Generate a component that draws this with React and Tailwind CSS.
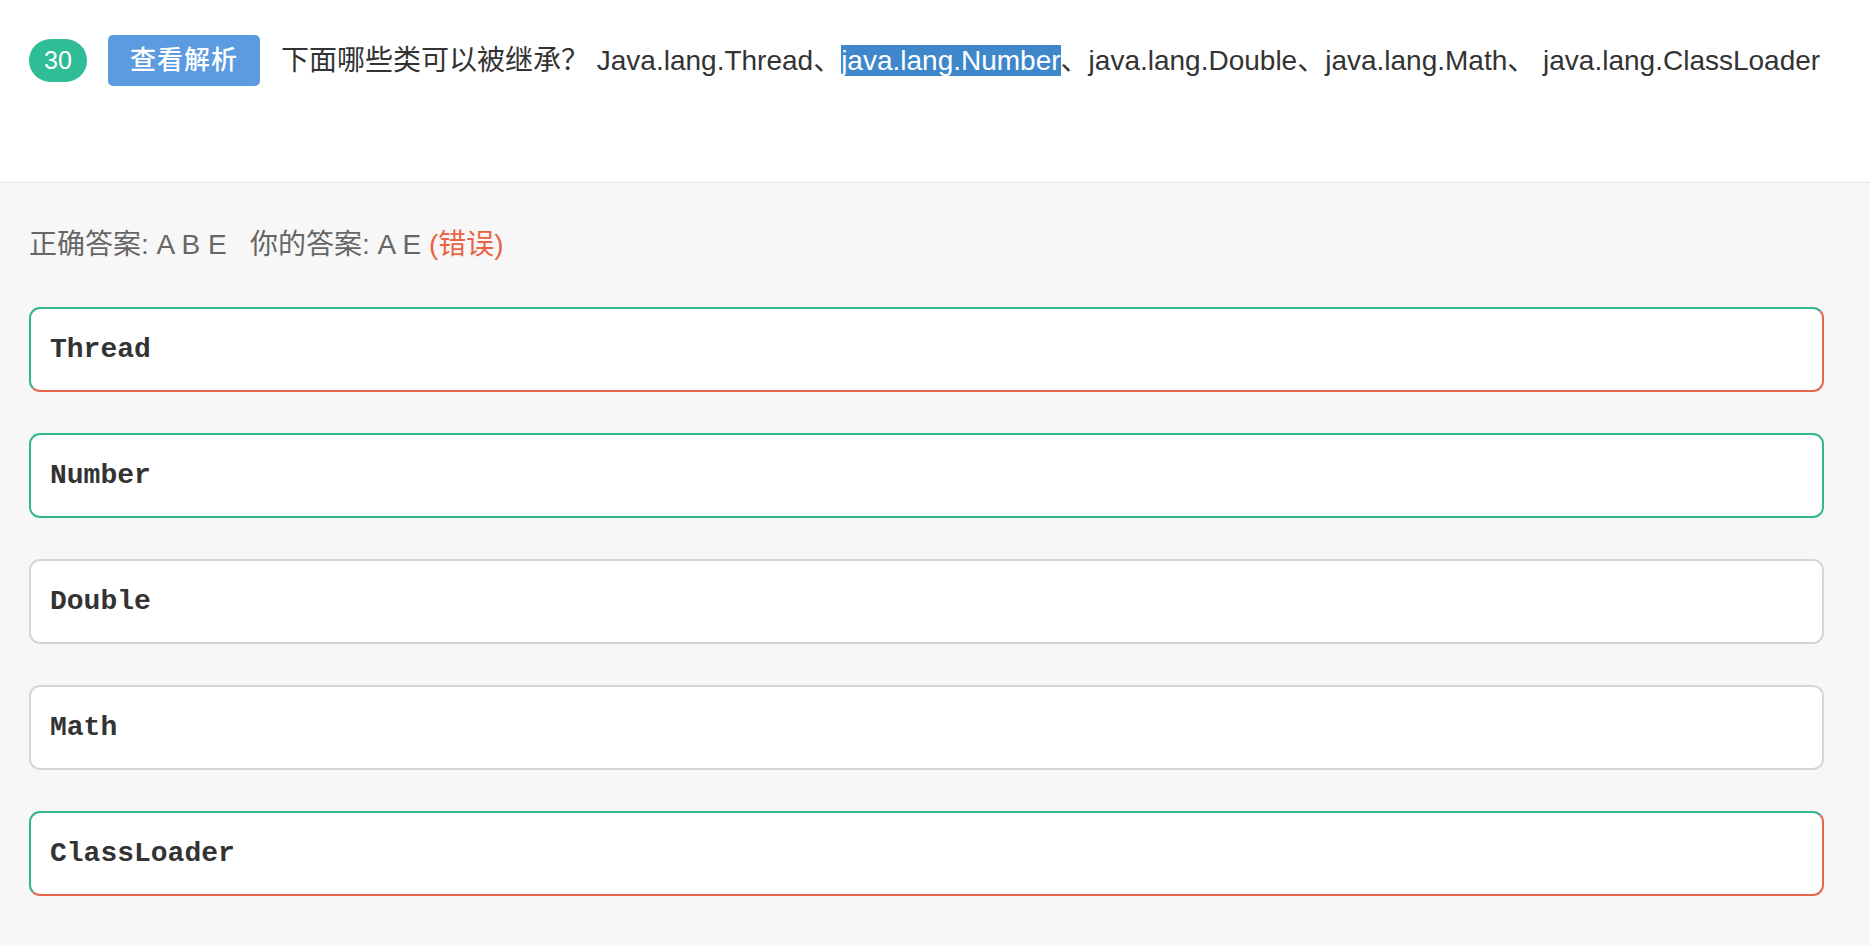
const question = {
  no: 30,
  prefix: '下面哪些类可以被继承？ ',
  parts: ['Java.lang.Thread、', 'java.lang.Number', '、java.lang.Double、java.lang.Math、 java.lang.ClassLoader'],
};

const options = [
  { label: 'Thread', state: 'mixed' },
  { label: 'Number', state: 'right' },
  { label: 'Double', state: 'none' },
  { label: 'Math', state: 'none' },
  { label: 'ClassLoader', state: 'mixed' },
];

const borderByState = {
  mixed: 'border-t-[#33b591] border-l-[#33b591] border-r-[#e8674b] border-b-[#e8674b]',
  right: 'border-[#33b591]',
  none: 'border-[#d5d5d5]',
};

const sans = "font-['Liberation_Sans','Noto_Sans_CJK_SC',sans-serif]";

export default function App() {
  return (
    <div className={`min-h-screen w-full bg-[#f7f7f7] ${sans}`}>
      {/* question header */}
      <header className="flex h-[183px] items-start border-b border-[#e6e6e6] bg-white pl-[29px] pt-[35px]">
        <div className="flex h-[51px] items-center">
          <span className="flex h-[43px] w-[58px] items-center justify-center rounded-full bg-[#2ebd96] text-[25px] font-medium text-white">
            {question.no}
          </span>
          <span className="ml-[21px] flex h-[51px] w-[152px] items-center justify-center rounded-[5px] bg-[#5c9be0] text-[26px] font-medium tracking-[1px] text-white">
            查看解析
          </span>
          <p className="ml-[21px] whitespace-pre text-[28px] text-[#333]">
            {question.prefix}
            {question.parts[0]}
            <span className="bg-[#3f87cb] text-white">{question.parts[1]}</span>
            {question.parts[2]}
          </p>
        </div>
      </header>

      {/* answer body */}
      <section className="px-[29px] pb-[50px]">
        <p className="flex h-[124px] items-center whitespace-pre text-[28px] text-[#666]">
          正确答案: A B E   你的答案: A E <span className="text-[#ea6344]">(错误)</span>
        </p>
        <div className="flex flex-col gap-[41px]">
          {options.map((opt) => (
            <div
              key={opt.label}
              className={`flex h-[85px] w-[1795px] items-center rounded-[11px] border-2 bg-white pl-[19px] ${borderByState[opt.state]}`}
            >
              <span className="font-['Liberation_Mono',monospace] text-[28px] font-bold text-[#333]">{opt.label}</span>
            </div>
          ))}
        </div>
      </section>
    </div>
  );
}
